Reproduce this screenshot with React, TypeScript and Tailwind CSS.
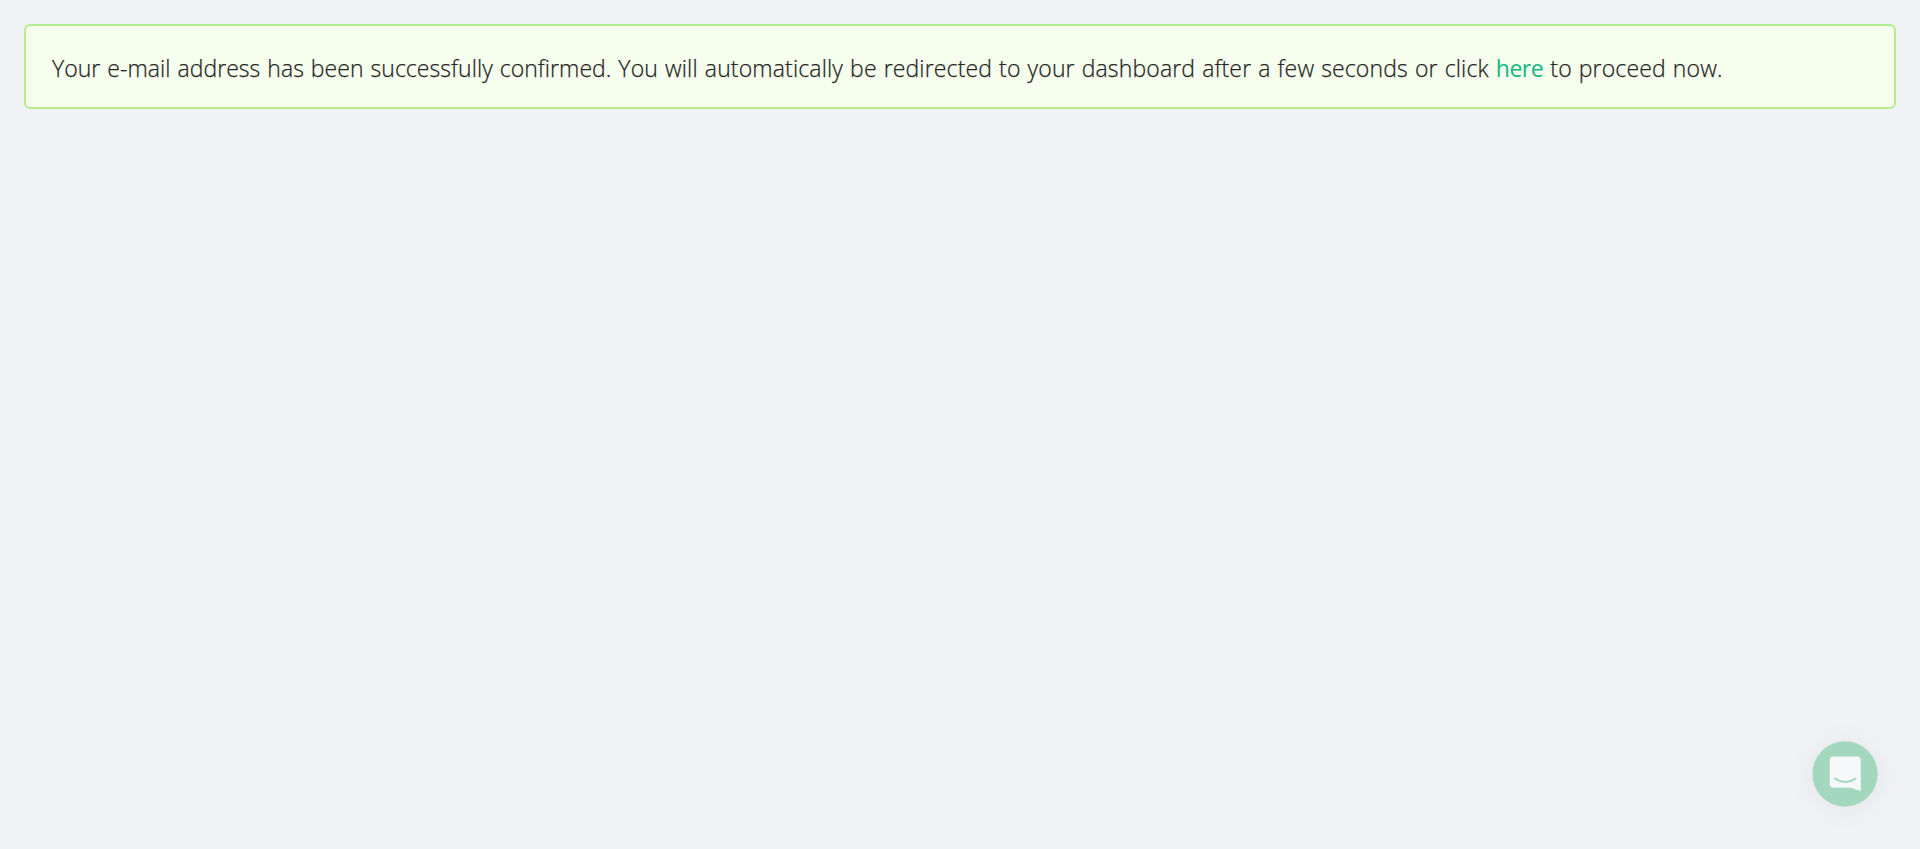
function ChatLauncher() {
  return (
    <button
      type="button"
      aria-label="Open chat"
      className="fixed right-[42px] bottom-[42px] size-[66px] rounded-full shadow-[0_2px_28px_rgba(0,0,0,0.06)]"
    >
      <svg viewBox="0 0 66 66" className="size-[66px]">
        <circle cx="33" cy="33" r="32.7" fill="#a3d8be" />
        <path
          d="M21.5 15.4H45a3.8 3.8 0 0 1 3.8 3.8V50.3L39.2 46.8H21.5a3.8 3.8 0 0 1-3.8-3.8V19.2a3.8 3.8 0 0 1 3.8-3.8Z"
          fill="#f6f8fa"
        />
        <path d="M22.9 37.6Q33.2 44.4 43.5 37.6" fill="none" stroke="#a3d8be" strokeWidth="1.9" strokeLinecap="round" />
      </svg>
    </button>
  );
}

export default function App() {
  return (
    <main className="min-h-screen bg-[#f0f2f5] p-6">
      <div
        role="alert"
        className="flex h-[85px] items-center rounded-[6px] border-2 border-[#b7eb8f] bg-[#f6ffed] pl-[26px] pt-[4px] font-['Open_Sans','Noto_Sans',sans-serif] text-[23px] font-light tracking-[0.14px] [word-spacing:0.9px] whitespace-pre text-[#262626] [-webkit-text-stroke:0.25px]"
      >
        <p>
          <span className="tracking-[0.05px]">Your e-mail address has been successfully confirmed.</span> You will automatically be redirected to your dashboard after a few seconds or click{" "}
          <a href="#" className="font-normal tracking-[-0.45px] text-[#10b981] [-webkit-text-stroke:0px]">here</a> to proceed now.
        </p>
      </div>
      <ChatLauncher />
    </main>
  );
}
